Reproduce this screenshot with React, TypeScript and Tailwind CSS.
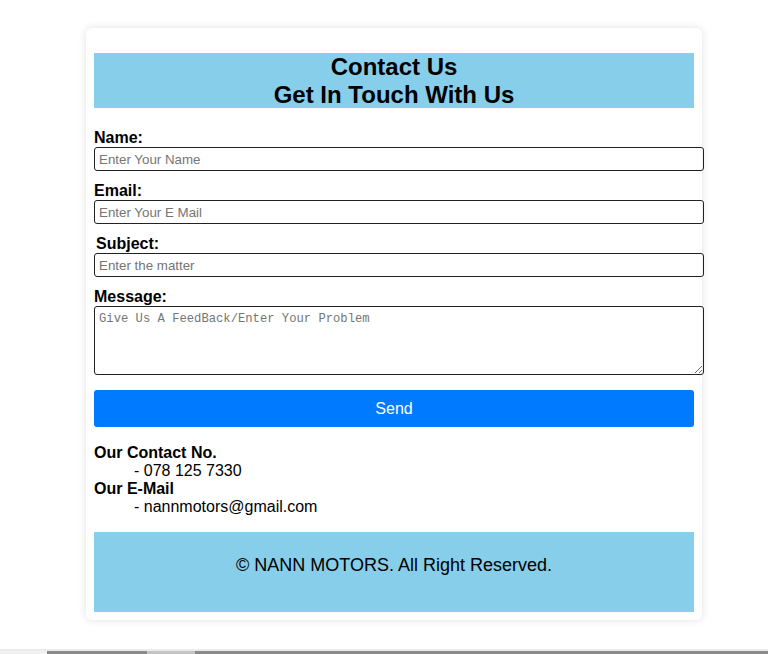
import React from "react";

export default function App() {
  const font = { fontFamily: '"Liberation Sans", Arial, sans-serif' };
  return (
    <div className="h-[654px] flex flex-col bg-white overflow-hidden font-['Liberation_Sans',Arial,sans-serif] text-black">
      <div className="mt-[28px] ml-[86px] w-[616px] bg-white rounded-[6px] shadow-[0_0_8px_rgba(0,0,0,0.12)] pt-[25px] px-[8px] pb-[8px]">
        <div className="h-[55px] bg-[#87ceeb] text-center text-[24px] font-bold leading-[27.5px]">
          <div>Contact Us</div>
          <div>Get In Touch With Us</div>
        </div>

        <form className="mt-[20px]" onSubmit={(e) => e.preventDefault()}>
          <label className="block text-[16px] font-bold leading-[19px]">Name:</label>
          <input
            type="text"
            placeholder="Enter Your Name"
            className="block box-content w-full px-[4px] pt-[4px] pb-[2px] border border-[#222] rounded-[3px] text-[13.33px] leading-[16px] placeholder:text-[#757575] outline-none"
          />
          <label className="block mt-[10px] text-[16px] font-bold leading-[19px]">Email:</label>
          <input
            type="text"
            placeholder="Enter Your E Mail"
            className="block box-content w-full px-[4px] pt-[4px] pb-[2px] border border-[#222] rounded-[3px] text-[13.33px] leading-[16px] placeholder:text-[#757575] outline-none"
          />
          <label className="block mt-[10px] ml-[2px] text-[16px] font-bold leading-[19px]">Subject:</label>
          <input
            type="text"
            placeholder="Enter the matter"
            className="block box-content w-full px-[4px] pt-[4px] pb-[2px] border border-[#222] rounded-[3px] text-[13.33px] leading-[16px] placeholder:text-[#757575] outline-none"
          />
          <label className="block mt-[10px] text-[16px] font-bold leading-[19px]">Message:</label>
          <textarea
            placeholder="Give Us A FeedBack/Enter Your Problem"
            className="block box-content w-full h-[61px] px-[4px] pt-[4px] pb-[2px] border border-[#222] rounded-[3px] font-['Liberation_Mono',monospace] text-[12.2px] leading-[16px] placeholder:text-[#757575] outline-none"
          />
          <button
            type="submit"
            className="block w-full mt-[15px] h-[37px] bg-[#007bff] text-white text-[16px] rounded-[3px]"
            style={font}
          >
            Send
          </button>
        </form>

        <div className="mt-[17px] text-[16px] leading-[18px]">
          <div className="font-bold">Our Contact No.</div>
          <div className="pl-[40px]">- 078 125 7330</div>
          <div className="font-bold">Our E-Mail</div>
          <div className="pl-[40px]">- nannmotors@gmail.com</div>
        </div>

        <div className="mt-[16px] h-[80px] bg-[#87ceeb] pt-[23px] text-center text-[18px] leading-[21px]">
          © NANN MOTORS. All Right Reserved.
        </div>
      </div>

      <div className="flex-1" />
      <div className="h-[2px] bg-[#ebebeb]" />
      <div className="h-[3px] flex">
        <div className="w-[47px] bg-[#f1f1f1]" />
        <div className="w-[100px] bg-[#8a8a8a]" />
        <div className="w-[48px] bg-[#c4c4c4]" />
        <div className="flex-1 bg-[#8a8a8a]" />
      </div>
    </div>
  );
}
